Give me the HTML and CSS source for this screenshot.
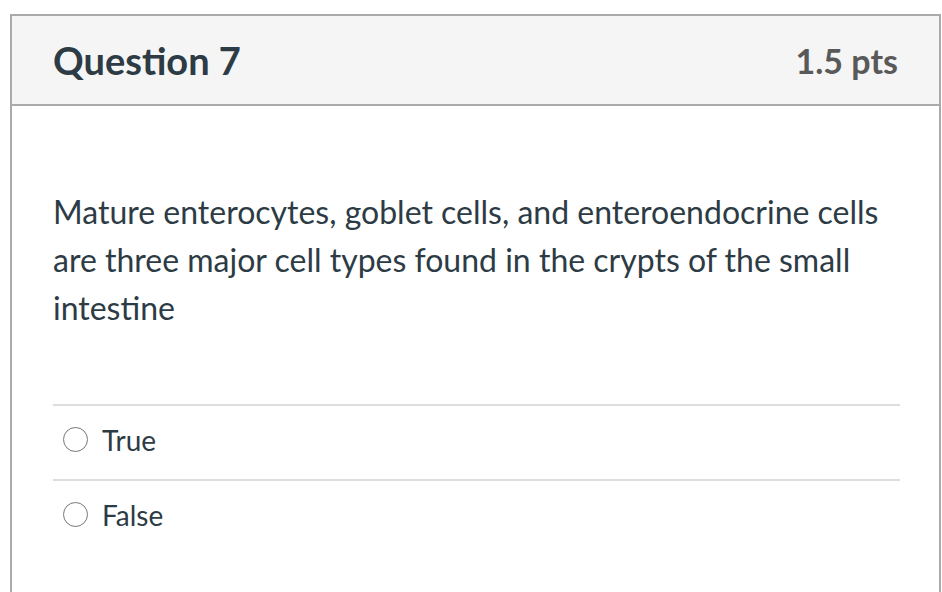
FILE: index.html
```html
<!DOCTYPE html>
<html lang="en">
<head>
    <meta charset="UTF-8">
    <meta name="viewport" content="width=device-width, initial-scale=1.0">
    <title>Question 7</title>
    <link rel="stylesheet" href="styles.css">
</head>
<body>
    <div class="question">
        <div class="question-header">
            <h2 class="question-name">Question 7</h2>
            <span class="question-points">1.5 pts</span>
        </div>
        <div class="question-body">
            <p class="question-text">Mature enterocytes, goblet cells, and enteroendocrine cells are three major cell types found in the crypts of the small intestine</p>
            <div class="answers">
                <label class="answer">
                    <input type="radio" name="q7" value="true">
                    <span class="radio"></span>
                    <span class="answer-label">True</span>
                </label>
                <label class="answer">
                    <input type="radio" name="q7" value="false">
                    <span class="radio"></span>
                    <span class="answer-label">False</span>
                </label>
            </div>
        </div>
    </div>
</body>
</html>
```

FILE: styles.css
```css
body {
    font-family: Lato, "Liberation Sans", sans-serif;
    margin: 0;
    padding: 0;
    background: #fff;
    color: #2d3b45;
}

.question {
    margin: 14px 0 0 10px;
    width: 931px;
    height: 600px;
    box-sizing: border-box;
    border: 2px solid #aaaaaa;
    border-bottom: none;
}

.question-header {
    display: flex;
    justify-content: space-between;
    align-items: center;
    height: 88px;
    padding: 0 41px;
    background-color: #f5f5f5;
    border-bottom: 2px solid #aaaaaa;
}

.question-name {
    margin: 0;
    font-size: 38px;
    font-weight: bold;
    color: #2d3b45;
}

.question-points {
    font-size: 34px;
    font-weight: bold;
    color: #595959;
}

.question-body {
    padding: 82px 39px 0 41px;
}

.question-text {
    margin: 0;
    font-size: 32px;
    line-height: 48px;
}

.answers {
    margin-top: 72px;
}

.answer {
    display: flex;
    align-items: center;
    gap: 14px;
    height: 73px;
    padding-left: 10px;
    border-top: 2px solid #dddddd;
    font-size: 28px;
}

.answer-label {
    margin-top: -6px;
}

.answer input {
    display: none;
}

.radio {
    width: 23px;
    height: 23px;
    margin-top: -6px;
    border: 1.5px solid #777777;
    border-radius: 50%;
}
```
